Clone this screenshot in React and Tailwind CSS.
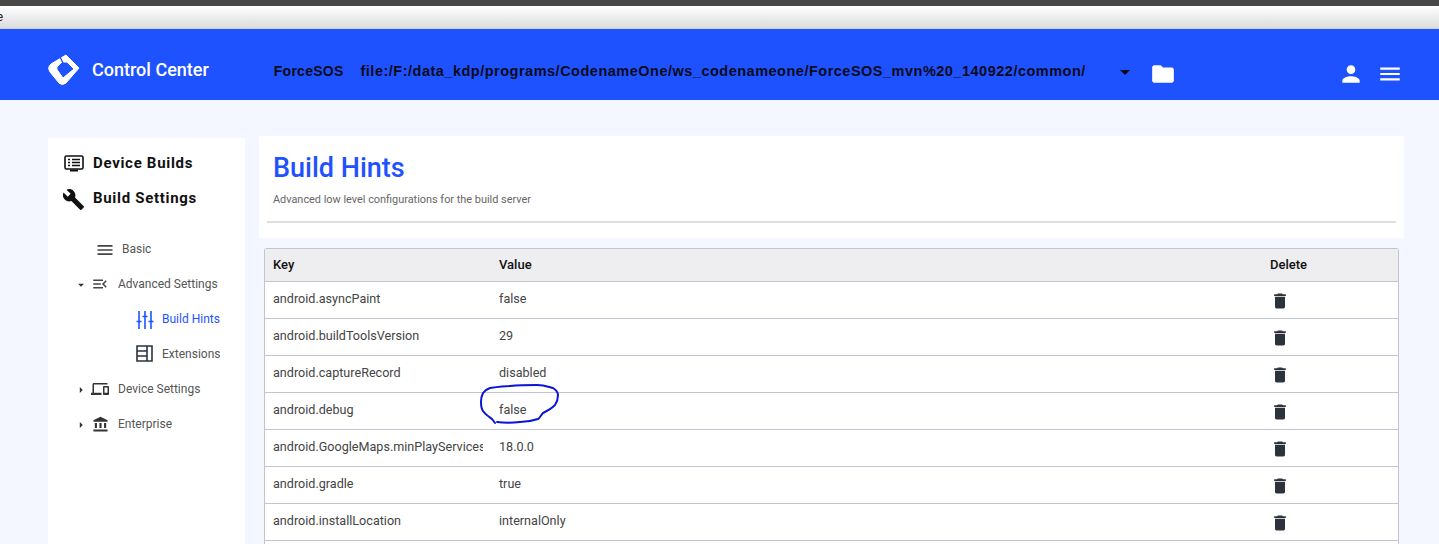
import {
  MdArrowDropDown,
  MdArrowRight,
  MdAccountBalance,
  MdBuild,
  MdDelete,
  MdDevices,
  MdFolder,
  MdMenu,
  MdMenuOpen,
  MdPerson,
} from "react-icons/md";

const rows = [
  ["android.asyncPaint", "false"],
  ["android.buildToolsVersion", "29"],
  ["android.captureRecord", "disabled"],
  ["android.debug", "false"],
  ["android.GoogleMaps.minPlayServices", "18.0.0"],
  ["android.gradle", "true"],
  ["android.installLocation", "internalOnly"],
  ["android.manifest", "true"],
];

function Logo() {
  return (
    <svg width="34" height="32" viewBox="0 0 34 32" className="shrink-0">
      <path
        fillRule="evenodd"
        fill="white"
        stroke="white"
        strokeWidth="1"
        strokeLinejoin="round"
        d="M19 1 L32 14 L19 29 Q15 32 12 29 L3 18 Q0 13 4 10 Z M15 8 L10 13 Q9 15 11 17 L16 24 L27 15 L20 8 Z"
      />
      <path d="M16 9 L13 3" stroke="#1f52ff" strokeWidth="1.4" />
    </svg>
  );
}

function BuildsIcon() {
  return (
    <svg width="20" height="18" viewBox="0 0 20 18" className="shrink-0">
      <rect x="1" y="1" width="18" height="13" rx="1.5" fill="none" stroke="#111" strokeWidth="1.6" />
      <path d="M6 15.5h8" stroke="#111" strokeWidth="2" />
      <path d="M4 4.5h2M8 4.5h8M4 7.5h2M8 7.5h8M4 10.5h2M8 10.5h8" stroke="#111" strokeWidth="1.5" />
    </svg>
  );
}

function SlidersIcon() {
  return (
    <svg width="18" height="18" viewBox="0 0 18 18" className="mt-[2px] shrink-0">
      <path
        d="M3 0v18M9 0v18M15 0v18M0.5 10.5h5M6.5 5.5h5M12.5 10.5h5"
        stroke="#1f52ff"
        strokeWidth="1.6"
      />
    </svg>
  );
}

function PanelsIcon() {
  return (
    <svg width="17" height="17" viewBox="0 0 17 17" className="shrink-0">
      <path
        d="M1 1h15v15H1zM11 1v15M1 6h10M1 11h10"
        fill="none"
        stroke="#2d333b"
        strokeWidth="1.6"
      />
    </svg>
  );
}

function NavItem({ caret, icon, label }) {
  return (
    <div className="flex h-[35px] items-center">
      <div className="flex w-[14px] justify-center pt-[2px] text-[#333]">{caret}</div>
      <div className="ml-[2px] flex w-[20px] justify-center pt-[1px]">{icon}</div>
      <span className="ml-[8px] text-[12px] text-[#555]">{label}</span>
    </div>
  );
}

export default function App() {
  return (
    <div className="relative h-[544px] overflow-hidden bg-[#f4f7ff] font-['Roboto',sans-serif]">
      {/* Browser chrome left in the capture */}
      <div className="h-[6px] bg-[#4a4846]" />
      <div className="h-[23px] border-b border-[#cfcfcf] bg-gradient-to-b from-white to-[#dcdcdc] text-[13px] leading-[22px] text-[#222]">
        <span className="ml-[-7px]">le</span>
      </div>

      {/* Header */}
      <header className="flex h-[71px] items-center bg-[#1f52ff] pt-[10px]">
        <div className="ml-[47px] flex items-center">
          <Logo />
          <span className="ml-[11px] text-[18px] font-medium text-white">Control Center</span>
        </div>
        <div className="ml-[65px] flex items-center font-['Liberation_Sans',sans-serif] text-[14px] font-bold tracking-[0.25px] text-[#0b0b1a]">
          <span className="mt-[4px]">ForceSOS</span>
          <span className="ml-[17px] mt-[4px] w-[752px] whitespace-nowrap text-[14.5px] tracking-[0.5px]">
            file:/F:/data_kdp/programs/CodenameOne/ws_codenameone/ForceSOS_mvn%20_140922/common/
          </span>
          <MdArrowDropDown size={24} className="mt-[4px] text-[#0b0b1a]" />
          <MdFolder size={26} className="ml-[13px] mt-[8px] text-white" />
        </div>
        <div className="ml-auto mr-[36px] mt-[8px] flex items-center gap-[13px] text-white">
          <MdPerson size={26} />
          <MdMenu size={26} />
        </div>
      </header>

      <div className="flex items-start pl-[48px]">
        {/* Sidebar */}
        <aside className="mt-[38px] h-[500px] w-[197px] shrink-0 bg-white pl-[16px] pt-[8px]">
          <div className="flex h-[35px] items-center gap-[9px] text-[15px] font-bold tracking-[0.7px] text-[#111]">
            <BuildsIcon />
            Device Builds
          </div>
          <div className="flex h-[35px] items-center gap-[7px] text-[15px] font-bold tracking-[0.7px] text-[#111]">
            <MdBuild size={23} className="ml-[-2px] mr-[1px] mt-[2px]" />
            Build Settings
          </div>
          <div className="ml-[10px] mt-[15px]">
            <div className="flex h-[35px] items-center pl-[21px]">
              <MdMenu size={20} className="mt-[2px] text-[#444]" />
              <span className="ml-[7px] text-[12px] text-[#555]">Basic</span>
            </div>
            <NavItem
              caret={<MdArrowDropDown size={18} />}
              icon={<MdMenuOpen size={18} className="text-[#444]" />}
              label="Advanced Settings"
            />
            <div className="flex h-[35px] items-center pl-[62px]">
              <SlidersIcon />
              <span className="ml-[8px] text-[12px] text-[#1f52ff]">Build Hints</span>
            </div>
            <div className="flex h-[35px] items-center pl-[62px]">
              <PanelsIcon />
              <span className="ml-[9px] text-[12px] text-[#555]">Extensions</span>
            </div>
            <NavItem
              caret={<MdArrowRight size={18} />}
              icon={<MdDevices size={18} className="text-[#333]" />}
              label="Device Settings"
            />
            <NavItem
              caret={<MdArrowRight size={18} />}
              icon={<MdAccountBalance size={17} className="text-[#333]" />}
              label="Enterprise"
            />
          </div>
        </aside>

        {/* Main */}
        <main className="ml-[14px] mt-[36px] w-[1145px] shrink-0">
          <section className="h-[102px] bg-white pl-[8px] pr-[8px]">
            <div className="h-[87px] border-b-2 border-[#dfdfdf] pl-[6px] pt-[16px]">
              <h1 className="text-[27px] font-medium leading-[32px] text-[#1f52ff]">Build Hints</h1>
              <p className="mt-[9px] text-[10.9px] leading-[14px] text-[#666]">
                Advanced low level configurations for the build server
              </p>
            </div>
          </section>

          <div className="relative ml-[5px] mt-[10px] w-[1135px] rounded-t-[3px] border border-b-0 border-[#c2c4d0] bg-white text-[12.6px] text-[#444]">
            <div className="flex h-[33px] items-center border-b border-[#c2c4d0] bg-[#eeeef1] text-[13px] font-medium text-[#111]">
              <div className="w-[226px] pl-[8px]">Key</div>
              <div className="w-[771px] pl-[8px]">Value</div>
              <div className="pl-[8px]">Delete</div>
            </div>
            {rows.map(([key, value]) => (
              <div key={key} className="flex h-[37px] items-center border-b border-[#c2c4d0]">
                <div className="ml-[8px] w-[210px] overflow-hidden whitespace-nowrap pb-[1px]">{key}</div>
                <div className="w-[779px] pl-[16px] pb-[1px]">{value}</div>
                <div className="pl-[8px] pt-[1px]">
                  <MdDelete size={20} className="text-[#2d333b]" />
                </div>
              </div>
            ))}

            {/* Hand drawn annotation from the capture */}
            <svg
              width="90"
              height="50"
              viewBox="0 0 90 50"
              className="pointer-events-none absolute left-[215px] top-[135px]"
            >
              <path
                d="M15 39 L12 35 C8 32 5 30 3 27 C1 24 1 21 1 18 C1 14 2 11 3 9 C5 6 7 5 10 4 C17 3 24 2 30 2 C40 1 50 1 57 1 C64 1 69 3 73 4 C76 6 78 9 78 11 C78 15 77 18 75 21 C71 25 67 27 63 29 C61 31 60 34 58 35 C52 37 46 38 40 38 C32 39 24 39 17 38"
                fill="none"
                stroke="#0a14d8"
                strokeWidth="2"
                strokeLinecap="round"
              />
            </svg>
          </div>
        </main>
      </div>
    </div>
  );
}
